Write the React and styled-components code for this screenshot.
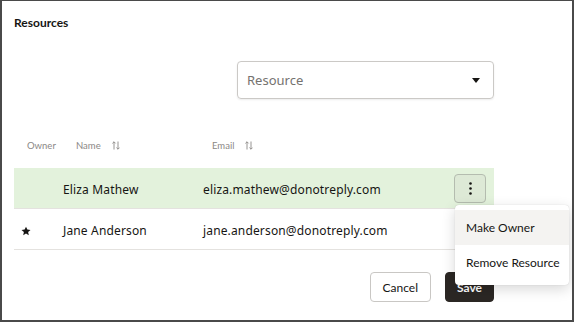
import React from 'react';
import styled, { createGlobalStyle } from 'styled-components';

const GlobalStyle = createGlobalStyle`
  * { box-sizing: border-box; }
  body {
    margin: 0;
    font-family: "Noto Sans", "Open Sans", sans-serif;
    color: #161513;
    background: #fff;
  }
`;

const Frame = styled.div`
  width: 574px;
  height: 322px;
  border: solid #4a4a4a;
  border-width: 1px 2px 2px 2px;
  padding: 14px 78px 0 12px;
  display: flex;
  flex-direction: column;
  overflow: hidden;
`;

const Title = styled.h1`
  margin: 0;
  font-family: Lato, "Noto Sans", sans-serif;
  font-size: 12px;
  line-height: 16px;
  font-weight: 700;
`;

const SelectRow = styled.div`
  display: flex;
  justify-content: flex-end;
  margin-top: 30px;
`;

const Select = styled.div`
  width: 257px;
  height: 38px;
  border: 1px solid #cbc9c6;
  border-radius: 4px;
  display: flex;
  align-items: center;
  justify-content: space-between;
  padding: 0 13px 0 9px;
  font-size: 13px;
  color: #75726f;
  box-shadow: 0 1px 2px rgba(0, 0, 0, 0.08);
`;

const Table = styled.div`
  margin-top: 23px;
  display: flex;
  flex-direction: column;
`;

const Grid = styled.div`
  display: grid;
  grid-template-columns: 44px 140px 1fr 48px;
  align-items: center;
  position: relative;
`;

const HeadRow = styled(Grid)`
  height: 46px;
`;

const HeadCell = styled.div`
  padding-left: ${(p) => p.$indent}px;
  font-family: Lato, "Noto Sans", sans-serif;
  font-size: 9.5px;
  color: #8b8886;
  display: flex;
  align-items: center;
  gap: 11px;
`;

const Row = styled(Grid)`
  height: 41px;
  border-bottom: 1px solid #e4e2df;
  background: ${(p) => (p.$selected ? '#e3f2dc' : '#fff')};
`;

const Cell = styled.div`
  padding: 3px 0 0 ${(p) => p.$indent}px;
  font-size: 12px;
  letter-spacing: 0.15px;
  white-space: nowrap;
  display: flex;
  align-items: center;
`;

const ActionCell = styled.div`
  display: flex;
  justify-content: flex-end;
  padding-right: 8px;
  position: relative;
`;

const Kebab = styled.div`
  width: 32px;
  height: 29px;
  border: 1px solid #b4bcaf;
  border-radius: 4px;
  background: #dde9d6;
  display: flex;
  align-items: center;
  justify-content: center;
`;

const Menu = styled.div`
  position: absolute;
  top: 31px;
  left: 9px;
  width: 114px;
  background: #fff;
  border-radius: 4px;
  box-shadow: 0 4px 14px rgba(0, 0, 0, 0.16), 0 0 1px rgba(0, 0, 0, 0.2);
  padding: 5px 0;
  z-index: 5;
`;

const MenuItem = styled.div`
  height: 35px;
  display: flex;
  align-items: center;
  padding-left: 11px;
  font-family: Lato, "Noto Sans", sans-serif;
  font-size: 12px;
  background: ${(p) => (p.$active ? '#f4f3f1' : '#fff')};
`;

const Footer = styled.div`
  margin-top: 22px;
  display: flex;
  justify-content: flex-end;
  gap: 14px;
`;

const Button = styled.button`
  height: 30px;
  padding: 0 ${(p) => (p.$primary ? '11px' : '12px')};
  border-radius: 4px;
  font-family: Lato, "Noto Sans", sans-serif;
  font-size: 12px;
  font-weight: ${(p) => (p.$primary ? 700 : 400)};
  border: 1px solid ${(p) => (p.$primary ? '#2b2724' : '#c9c7c4')};
  background: ${(p) => (p.$primary ? '#2b2724' : '#fff')};
  color: ${(p) => (p.$primary ? '#fff' : '#161513')};
`;

const Caret = () => (
  <svg width="8" height="5" viewBox="0 0 8 5">
    <path d="M0 0h8L4 5z" fill="#161513" />
  </svg>
);

const SortIcon = () => (
  <svg width="8" height="9" viewBox="0 0 8 9" fill="none" stroke="#8b8886" strokeWidth="0.9">
    <path d="M2 8.5V0.8M0.4 2.4L2 0.8l1.6 1.6" />
    <path d="M6 0.5v7.7M4.4 6.6L6 8.2l1.6-1.6" />
  </svg>
);

const Star = () => (
  <svg width="10" height="10" viewBox="0 0 24 24">
    <path
      d="M12 1.5l3.2 7 7.6.8-5.7 5.1 1.6 7.5L12 18l-6.7 3.9 1.6-7.5L1.2 9.3l7.6-.8z"
      fill="#161513"
    />
  </svg>
);

const Dots = () => (
  <svg width="3" height="13" viewBox="0 0 3 13">
    <circle cx="1.5" cy="1.5" r="1.3" fill="#161513" />
    <circle cx="1.5" cy="6.5" r="1.3" fill="#161513" />
    <circle cx="1.5" cy="11.5" r="1.3" fill="#161513" />
  </svg>
);

const people = [
  { name: 'Eliza Mathew', email: 'eliza.mathew@donotreply.com', owner: false, selected: true },
  { name: 'Jane Anderson', email: 'jane.anderson@donotreply.com', owner: true, selected: false },
];

export default function App() {
  return (
    <>
      <GlobalStyle />
      <Frame>
        <Title>Resources</Title>
        <SelectRow>
          <Select>
            <span>Resource</span>
            <Caret />
          </Select>
        </SelectRow>
        <Table>
          <HeadRow>
            <HeadCell $indent={13}>Owner</HeadCell>
            <HeadCell $indent={18}>
              Name <SortIcon />
            </HeadCell>
            <HeadCell $indent={14}>
              Email <SortIcon />
            </HeadCell>
            <div />
          </HeadRow>
          {people.map((p) => (
            <Row key={p.email} $selected={p.selected}>
              <Cell $indent={7}>{p.owner && <Star />}</Cell>
              <Cell $indent={5}>{p.name}</Cell>
              <Cell $indent={5}>{p.email}</Cell>
              <ActionCell>
                {p.selected && (
                  <>
                    <Kebab>
                      <Dots />
                    </Kebab>
                    <Menu>
                      <MenuItem $active>Make Owner</MenuItem>
                      <MenuItem>Remove Resource</MenuItem>
                    </Menu>
                  </>
                )}
              </ActionCell>
            </Row>
          ))}
        </Table>
        <Footer>
          <Button>Cancel</Button>
          <Button $primary>Save</Button>
        </Footer>
      </Frame>
    </>
  );
}
